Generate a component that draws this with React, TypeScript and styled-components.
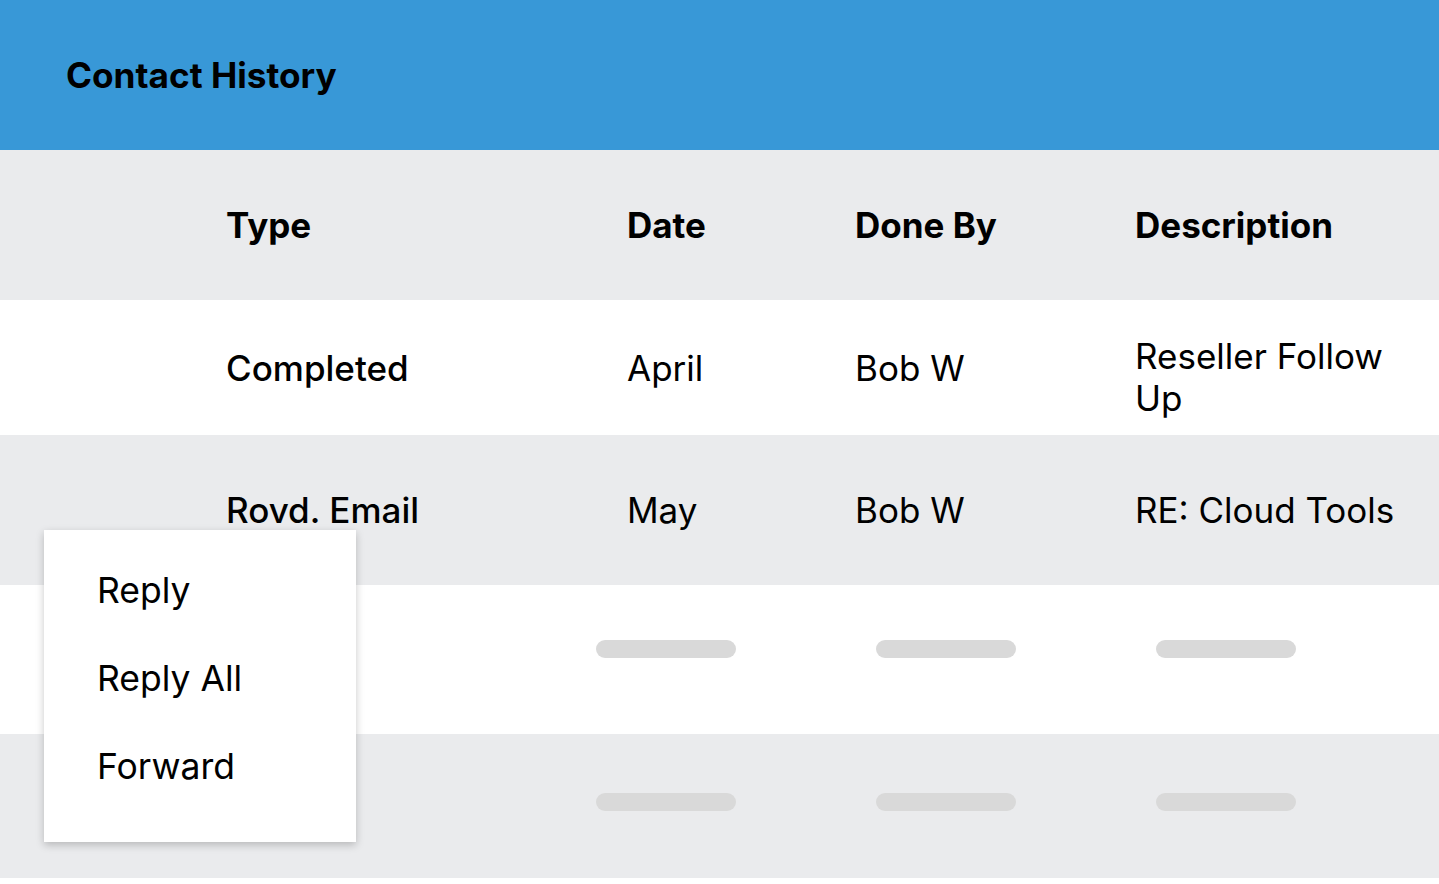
import React from "react";
import styled, { createGlobalStyle } from "styled-components";

const GlobalStyle = createGlobalStyle`
  html, body { margin: 0; padding: 0; background: #ffffff; }
  body { font-family: Inter, "Noto Sans", sans-serif; color: #000; }
  * { box-sizing: border-box; }
`;

const Page = styled.div`
  position: relative;
  width: 1439px;
  min-height: 884px;
  background: #ffffff;
`;

const TitleBar = styled.header`
  height: 150px;
  background: #3898d7;
  display: flex;
  align-items: center;
  padding: 2px 0 0 66px;
`;

const Title = styled.h1`
  margin: 0;
  font-size: 35.2px;
  font-weight: 700;
  line-height: 1;
`;

const Table = styled.div`
  display: flex;
  flex-direction: column;
`;

const Row = styled.div<{ $tone: "gray" | "white"; $height: number; $top?: number }>`
  display: grid;
  grid-template-columns: 401px 228px 280px 1fr;
  align-items: ${(p) => (p.$top !== undefined ? "start" : "center")};
  padding-left: 226px;
  padding-top: ${(p) => p.$top ?? 0}px;
  height: ${(p) => p.$height}px;
  background: ${(p) => (p.$tone === "gray" ? "#eaebed" : "#ffffff")};
`;

const HeadCell = styled.div`
  font-size: 35px;
  font-weight: 700;
  line-height: 42px;
`;

const Cell = styled.div<{ $strong?: boolean; $shift?: number }>`
  font-size: 35px;
  font-weight: ${(p) => (p.$strong ? 500 : 400)};
  line-height: 42px;
  margin-top: ${(p) => p.$shift ?? 0}px;
  padding-right: 20px;
`;

const Bar = styled.div<{ $offset: number }>`
  width: 140px;
  height: 18px;
  border-radius: 9px;
  background: #d9d9d9;
  margin-left: ${(p) => p.$offset}px;
`;

const Menu = styled.ul`
  position: absolute;
  left: 44px;
  top: 530px;
  width: 312px;
  height: 312px;
  margin: 0;
  padding: 17px 0 0 53px;
  list-style: none;
  background: #ffffff;
  box-shadow: 0 3px 8px rgba(0, 0, 0, 0.22);
`;

const MenuItem = styled.li`
  font-size: 35.5px;
  line-height: 88px;
  font-weight: 400;
`;

const headers = ["Type", "Date", "Done By", "Description"];

export default function App() {
  return (
    <Page>
      <GlobalStyle />
      <TitleBar>
        <Title>Contact History</Title>
      </TitleBar>
      <Table>
        <Row $tone="gray" $height={150}>
          {headers.map((h) => (
            <HeadCell key={h}>{h}</HeadCell>
          ))}
        </Row>
        <Row $tone="white" $height={135}>
          <Cell $strong>Completed</Cell>
          <Cell>April</Cell>
          <Cell>Bob W</Cell>
          <Cell $shift={18}>Reseller Follow Up</Cell>
        </Row>
        <Row $tone="gray" $height={150}>
          <Cell $strong>Rovd. Email</Cell>
          <Cell>May</Cell>
          <Cell>Bob W</Cell>
          <Cell>RE: Cloud Tools</Cell>
        </Row>
        <Row $tone="white" $height={149} $top={55}>
          <span />
          <Bar $offset={-31} />
          <Bar $offset={21} />
          <Bar $offset={21} />
        </Row>
        <Row $tone="gray" $height={144} $top={59}>
          <span />
          <Bar $offset={-31} />
          <Bar $offset={21} />
          <Bar $offset={21} />
        </Row>
      </Table>
      <Menu>
        <MenuItem>Reply</MenuItem>
        <MenuItem>Reply All</MenuItem>
        <MenuItem>Forward</MenuItem>
      </Menu>
    </Page>
  );
}
